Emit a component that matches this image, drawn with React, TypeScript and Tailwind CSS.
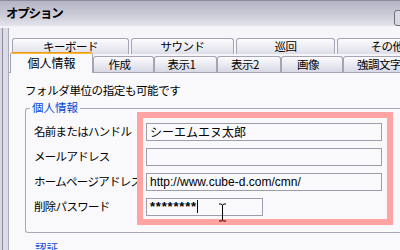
import React from "react";

const jp = { fontFamily: '"Noto Sans CJK JP", "Noto Sans", sans-serif' };

const backTabs = [
  { label: "キーボード", w: "w-[117px]" },
  { label: "サウンド", w: "w-[103px]" },
  { label: "巡回", w: "w-[99px]" },
  { label: "その他", w: "w-[100px]" },
];

const frontTabs = [
  { label: "作成", w: "w-[61px]" },
  { label: "表示1", w: "w-[63px]" },
  { label: "表示2", w: "w-[64px]" },
  { label: "画像", w: "w-[62px]" },
  { label: "強調文字", w: "w-[80px]" },
];

function Field({ label, children, short }: { label: string; children?: React.ReactNode; short?: boolean }) {
  return (
    <div className="flex h-[18px] items-center">
      <span className="w-[112px] shrink-0 whitespace-nowrap text-[11.5px] leading-none tracking-[-0.7px] text-black">{label}</span>
      <div
        className={`flex h-[18px] shrink-0 items-center border border-[#9c9cac] bg-[#fafafd] pl-[3px] text-[12px] leading-none text-black ${
          short ? "w-[117px]" : "w-[236px]"
        }`}
      >
        {children}
      </div>
    </div>
  );
}

export default function App() {
  return (
    <div className="relative h-[250px] w-[400px] overflow-hidden bg-[#f9f9fc]" style={jp}>
      {/* title bar */}
      <div className="relative flex h-[26px] items-center border-t border-[#8c8c9c] bg-gradient-to-b from-[#b4b4c4] via-[#c8c8d6] to-[#e4e4ec] pl-[6px]">
        <span className="text-[12.5px] font-bold leading-none tracking-[-1.2px] text-black">オプション</span>
        <div className="absolute right-[-6px] top-[9px] h-[16px] w-[12px] rounded-[3px] border border-[#6c6c7c] bg-[#d8d8e2]" />
      </div>
      <div className="h-[2px] bg-[#f4f4f8]" />

      <div className="flex h-[222px]">
        {/* left frame */}
        <div className="flex w-[9px] shrink-0">
          <div className="w-[2px] bg-[#d8d8e2]" />
          <div className="w-px bg-[#8c8c9c]" />
          <div className="w-[5px] bg-[#dcdce6]" />
          <div className="w-px bg-[#a8a8b8]" />
        </div>

        <div className="flex min-w-0 flex-1 flex-col">
          {/* tabs */}
          <div className="bg-[#f6f6fa] pt-[10px]">
            <div className="ml-[3px] flex gap-[2px]">
              {backTabs.map((t) => (
                <div
                  key={t.label}
                  className={`flex h-[16px] shrink-0 items-center justify-center rounded-t-[3px] border border-b-0 border-[#a4a4b4] bg-gradient-to-b from-[#fcfcfe] to-[#dedee8] text-[11.5px] leading-none tracking-[-0.5px] text-black ${t.w}`}
                >
                  {t.label}
                </div>
              ))}
            </div>
            <div className="ml-px flex h-[18px] items-end">
              <div className="relative z-10 -mb-px flex h-[21px] w-[83px] shrink-0 flex-col rounded-t-[3px] border-x border-[#a4a4b4] bg-[#f9f9fc]">
                <div className="h-[2px] rounded-t-[2px] bg-gradient-to-b from-[#e68a00] to-[#ffc848]" />
                <div className="flex flex-1 items-center justify-center pb-[2px] text-[12px] leading-none text-black">個人情報</div>
              </div>
              {frontTabs.map((t) => (
                <div
                  key={t.label}
                  className={`flex h-[16px] shrink-0 items-center justify-center rounded-t-[3px] border border-b-0 border-[#a4a4b4] bg-gradient-to-b from-[#fcfcfe] to-[#d8d8e4] pr-[8px] text-[11.5px] leading-none tracking-[-0.5px] text-black ${t.w}`}
                >
                  {t.label}
                </div>
              ))}
            </div>
          </div>

          {/* panel */}
          <div className="flex-1 border-t border-[#a4a4b4] bg-[#f9f9fc] pl-[16px] pt-[12px]">
            <div className="whitespace-nowrap text-[11.5px] leading-none tracking-[-0.4px] text-black">フォルダ単位の指定も可能です</div>

            <div className="relative mt-[11px] h-[125px] w-[420px] rounded-l-[3px] border border-r-0 border-[#a8a8b8] pl-[8px] pt-[14px]">
              <span className="absolute left-[4px] top-[-7px] bg-[#f9f9fc] px-[2px] text-[11.5px] leading-none text-[#0046d5]">個人情報</span>

              <div className="flex flex-col gap-[7px]">
                <Field label="名前またはハンドル">シーエムエヌ太郎</Field>
                <Field label="メールアドレス" />
                <Field label="ホームページアドレス">
                  <span style={{ fontFamily: '"Liberation Sans", sans-serif' }}>http://www.cube-d.com/cmn/</span>
                </Field>
                <Field label="削除パスワード" short>
                  <span className="text-[13px] font-bold tracking-[0.8px]" style={{ fontFamily: '"Liberation Sans", sans-serif' }}>
                    ********
                  </span>
                  <span className="h-[13px] w-px bg-black" />
                </Field>
              </div>
            </div>

            <div className="mt-[10px] pl-[10px] text-[11.5px] leading-none text-[#0046d5]">認証</div>
          </div>
        </div>
      </div>

      {/* highlight frame drawn over the form */}
      <div className="pointer-events-none absolute left-[137px] top-[112px] h-[113px] w-[256px] border-[6px] border-[#ffa3a3]" />

      {/* mouse I-beam cursor */}
      <svg className="absolute left-[218px] top-[203px]" width="9" height="19" viewBox="0 0 9 19">
        <path d="M1 1h2l1.5 1L6 1h2M4.5 2v15M1 18h2l1.5-1L6 18h2" stroke="#000" strokeWidth="1" fill="none" />
        <path d="M2 18h5" stroke="#c04040" strokeWidth="1" />
      </svg>
    </div>
  );
}
